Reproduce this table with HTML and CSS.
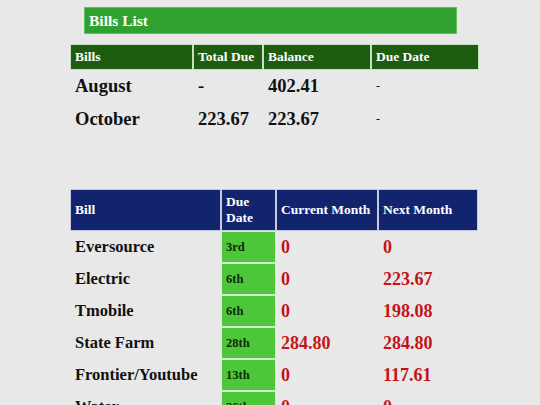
FILE: index.html
```html
<!DOCTYPE html>
<html lang="en">
<head>
    <meta charset="UTF-8">
    <meta name="viewport" content="width=device-width, initial-scale=1.0">
    <title>Bills List</title>
    <link rel="stylesheet" href="styles.css">
</head>
<body>
    <div class="title">Bills List</div>
    <table class="summary">
        <colgroup>
            <col style="width:123px">
            <col style="width:70px">
            <col style="width:108px">
            <col style="width:108px">
        </colgroup>
        <tr class="head">
            <th>Bills</th>
            <th>Total Due</th>
            <th>Balance</th>
            <th>Due Date</th>
        </tr>
        <tr>
            <td>August</td>
            <td>-</td>
            <td>402.41</td>
            <td class="small">-</td>
        </tr>
        <tr>
            <td>October</td>
            <td>223.67</td>
            <td>223.67</td>
            <td class="small">-</td>
        </tr>
    </table>

    <table class="bills">
        <colgroup>
            <col style="width:151px">
            <col style="width:55px">
            <col style="width:102px">
            <col style="width:100px">
        </colgroup>
        <tr class="head">
            <th>Bill</th>
            <th>Due<br>Date</th>
            <th>Current Month</th>
            <th>Next Month</th>
        </tr>
        <tr><td>Eversource</td><td class="due">3rd</td><td class="amt">0</td><td class="amt">0</td></tr>
        <tr><td>Electric</td><td class="due">6th</td><td class="amt">0</td><td class="amt">223.67</td></tr>
        <tr><td>Tmobile</td><td class="due">6th</td><td class="amt">0</td><td class="amt">198.08</td></tr>
        <tr><td>State Farm</td><td class="due">28th</td><td class="amt">284.80</td><td class="amt">284.80</td></tr>
        <tr><td>Frontier/Youtube</td><td class="due">13th</td><td class="amt">0</td><td class="amt">117.61</td></tr>
        <tr><td>Water</td><td class="due">26th</td><td class="amt">0</td><td class="amt">0</td></tr>
    </table>
</body>
</html>
```
FILE: styles.css
```css
body { margin: 0; background: #e8e8e8; font-family: "Liberation Serif", "Times New Roman", serif; font-weight: bold; color: #111; }

.title { margin: 7px 0 0 84px; height: 27px; line-height: 25px; padding-left: 4px; box-sizing: border-box; width: 373px;
    background: #2fa12f; border: 1px solid #5cc25c; color: #fff; font-size: 15.5px; }

table { border-collapse: separate; border-spacing: 0; table-layout: fixed; margin-left: 70px; }
th, td { padding: 0 4px; text-align: left; border: 1px solid transparent; white-space: nowrap; }
th { color: #fff; font-size: 13.5px; }

.summary { margin-top: 10px; width: 409px; }
.summary .head { height: 26px; }
.summary .head th { background: #1e5c10; border-color: #c9dfc3; }
.summary td { height: 31px; font-size: 18.5px; }
.summary td.small { font-size: 12px; font-weight: normal; }

.bills { margin-top: 53px; width: 408px; }
.bills .head { height: 42px; }
.bills .head th { background: #13246e; border-color: #c4cadc; line-height: 16px; }
.bills td { height: 30px; font-size: 16.5px; }
.bills td.due { background: #4dc63a; border-color: #d6ecd0; font-size: 12.5px; color: #0e2a06; }
.bills td.amt { color: #c21418; font-size: 18px; }
```
